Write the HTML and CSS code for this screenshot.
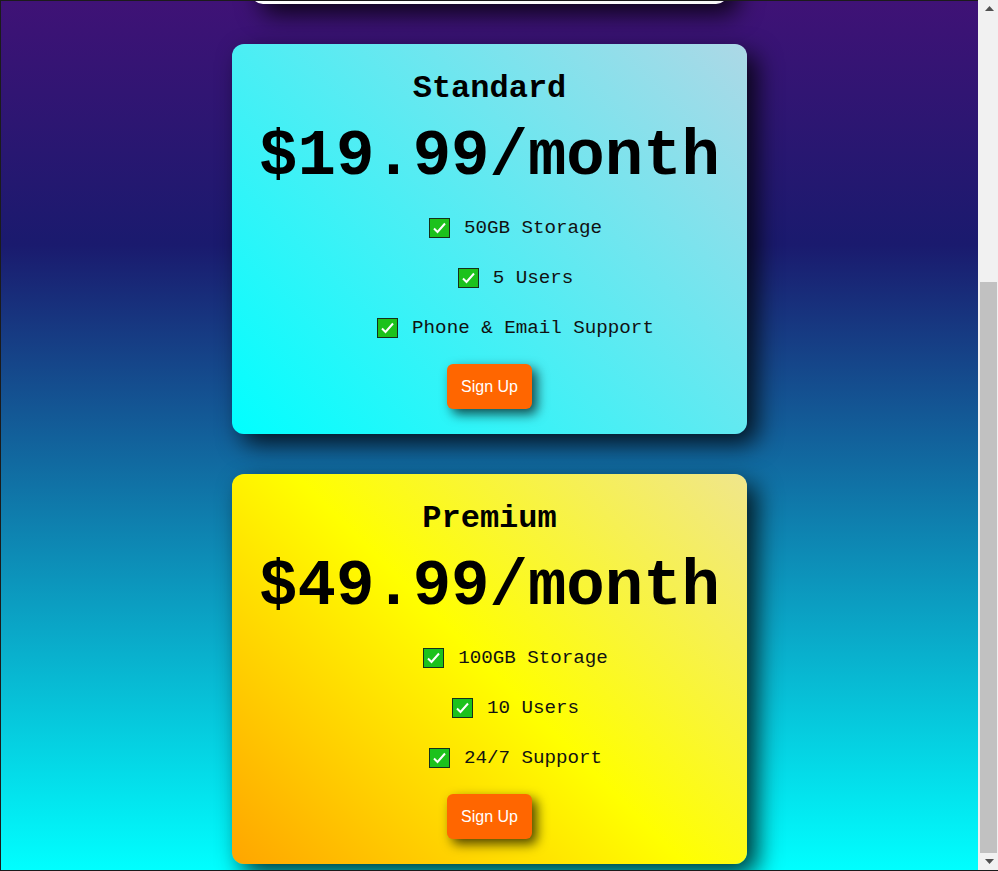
FILE: index.html
```html
<!DOCTYPE html>
<html lang="en">

<head>
    <meta charset="UTF-8">
    <meta name="viewport" content="width=device-width, initial-scale=1.0">
    <title>Pricing Plans</title>
    <link rel="stylesheet" href="styles.css">
</head>

<body>
    <div class="page">
        <main class="plans">
            <section class="plan basic">
                <h2>Basic</h2>
                <p class="price">$9.99/month</p>
                <ul class="features">
                    <li><svg class="check" viewBox="0 0 21 20"><rect x="0.5" y="0.5" width="20" height="19" fill="#1cc21c" stroke="#14301a"/><path d="M5 10.5 L8.5 14 L16 5.5" fill="none" stroke="#fff" stroke-width="2"/></svg>10GB Storage</li>
                    <li><svg class="check" viewBox="0 0 21 20"><rect x="0.5" y="0.5" width="20" height="19" fill="#1cc21c" stroke="#14301a"/><path d="M5 10.5 L8.5 14 L16 5.5" fill="none" stroke="#fff" stroke-width="2"/></svg>1 User</li>
                    <li><svg class="check" viewBox="0 0 21 20"><rect x="0.5" y="0.5" width="20" height="19" fill="#1cc21c" stroke="#14301a"/><path d="M5 10.5 L8.5 14 L16 5.5" fill="none" stroke="#fff" stroke-width="2"/></svg>Email Support</li>
                </ul>
                <button type="button">Sign Up</button>
            </section>

            <section class="plan standard">
                <h2>Standard</h2>
                <p class="price">$19.99/month</p>
                <ul class="features">
                    <li><svg class="check" viewBox="0 0 21 20"><rect x="0.5" y="0.5" width="20" height="19" fill="#1cc21c" stroke="#14301a"/><path d="M5 10.5 L8.5 14 L16 5.5" fill="none" stroke="#fff" stroke-width="2"/></svg>50GB Storage</li>
                    <li><svg class="check" viewBox="0 0 21 20"><rect x="0.5" y="0.5" width="20" height="19" fill="#1cc21c" stroke="#14301a"/><path d="M5 10.5 L8.5 14 L16 5.5" fill="none" stroke="#fff" stroke-width="2"/></svg>5 Users</li>
                    <li><svg class="check" viewBox="0 0 21 20"><rect x="0.5" y="0.5" width="20" height="19" fill="#1cc21c" stroke="#14301a"/><path d="M5 10.5 L8.5 14 L16 5.5" fill="none" stroke="#fff" stroke-width="2"/></svg>Phone &amp; Email Support</li>
                </ul>
                <button type="button">Sign Up</button>
            </section>

            <section class="plan premium">
                <h2>Premium</h2>
                <p class="price">$49.99/month</p>
                <ul class="features">
                    <li><svg class="check" viewBox="0 0 21 20"><rect x="0.5" y="0.5" width="20" height="19" fill="#1cc21c" stroke="#14301a"/><path d="M5 10.5 L8.5 14 L16 5.5" fill="none" stroke="#fff" stroke-width="2"/></svg>100GB Storage</li>
                    <li><svg class="check" viewBox="0 0 21 20"><rect x="0.5" y="0.5" width="20" height="19" fill="#1cc21c" stroke="#14301a"/><path d="M5 10.5 L8.5 14 L16 5.5" fill="none" stroke="#fff" stroke-width="2"/></svg>10 Users</li>
                    <li><svg class="check" viewBox="0 0 21 20"><rect x="0.5" y="0.5" width="20" height="19" fill="#1cc21c" stroke="#14301a"/><path d="M5 10.5 L8.5 14 L16 5.5" fill="none" stroke="#fff" stroke-width="2"/></svg>24/7 Support</li>
                </ul>
                <button type="button">Sign Up</button>
            </section>
        </main>
    </div>

    <!-- window scrollbar, scrolled to the end -->
    <div class="scrollbar">
        <div class="arrow"><svg viewBox="0 0 9 5" width="9" height="5"><path d="M4.5 0 L9 5 L0 5 Z" fill="#505050"/></svg></div>
        <div class="track"><div class="thumb"></div></div>
        <div class="arrow"><svg viewBox="0 0 9 5" width="9" height="5"><path d="M0 0 L9 0 L4.5 5 Z" fill="#505050"/></svg></div>
    </div>
</body>

</html>
```

FILE: styles.css
```css
html,
body {
    margin: 0;
    height: 100%;
}

body {
    display: flex;
    box-sizing: border-box;
    border-bottom: 1px solid #1b1b1b;
    font-family: "Liberation Mono", "DejaVu Sans Mono", monospace;
    color: #000;
}

/* scroll box that starts at the bottom */
.page {
    flex: 1;
    border-top: 1px solid #1b1b1b;
    border-left: 1px solid #1b1b1b;
    overflow-y: scroll;
    scrollbar-width: none;
    display: flex;
    flex-direction: column-reverse;
    background: linear-gradient(#3f1276, #1a1a6e 28%, #00ffff);
}

.plans {
    flex-shrink: 0;
    display: flex;
    flex-direction: column;
    align-items: center;
    gap: 40px;
    padding: 20px 0 6px;
}

.plan {
    display: flex;
    flex-direction: column;
    align-items: center;
    padding: 27px 27px 25px;
    border-radius: 12px;
    box-shadow: 10px 10px 25px rgba(0, 0, 0, 0.8);
    text-align: center;
}

.basic {
    background: linear-gradient(45deg, #ffffff, #f2f2f2);
}

.standard {
    background: linear-gradient(45deg, cyan, lightblue);
}

.premium {
    background: linear-gradient(45deg, orange, yellow, khaki);
}

h2 {
    margin: 0;
    font-size: 32px;
    line-height: 36px;
}

.price {
    margin: 14px 0 0;
    font-size: 64px;
    line-height: 72px;
    font-weight: bold;
}

.features {
    list-style: none;
    margin: 20px 0 0;
    padding: 0 0 0 52px;
    display: flex;
    flex-direction: column;
    gap: 20px;
    font-size: 19.2px;
    line-height: 30px;
    color: #111;
}

.features li {
    display: flex;
    align-items: center;
    justify-content: center;
    gap: 14px;
}

.check {
    width: 21px;
    height: 20px;
}

button {
    margin-top: 21px;
    padding: 13px 14px;
    font-family: "Liberation Sans", Arial, sans-serif;
    font-size: 16px;
    line-height: 19px;
    color: #fff;
    background-color: #ff6600;
    border: none;
    border-radius: 6px;
    box-shadow: 5px 5px 12px rgba(0, 0, 0, 0.7);
    cursor: pointer;
}

.scrollbar {
    width: 20px;
    flex-shrink: 0;
    display: flex;
    flex-direction: column;
    background-color: #f1f1f1;
}

.arrow {
    height: 17px;
    display: flex;
    align-items: center;
    justify-content: center;
    padding-left: 2px;
}

.track {
    flex: 1;
    display: flex;
    flex-direction: column;
    padding: 265px 1px 0 2px;
}

.thumb {
    height: 571px;
    background-color: #c1c1c1;
}
```
